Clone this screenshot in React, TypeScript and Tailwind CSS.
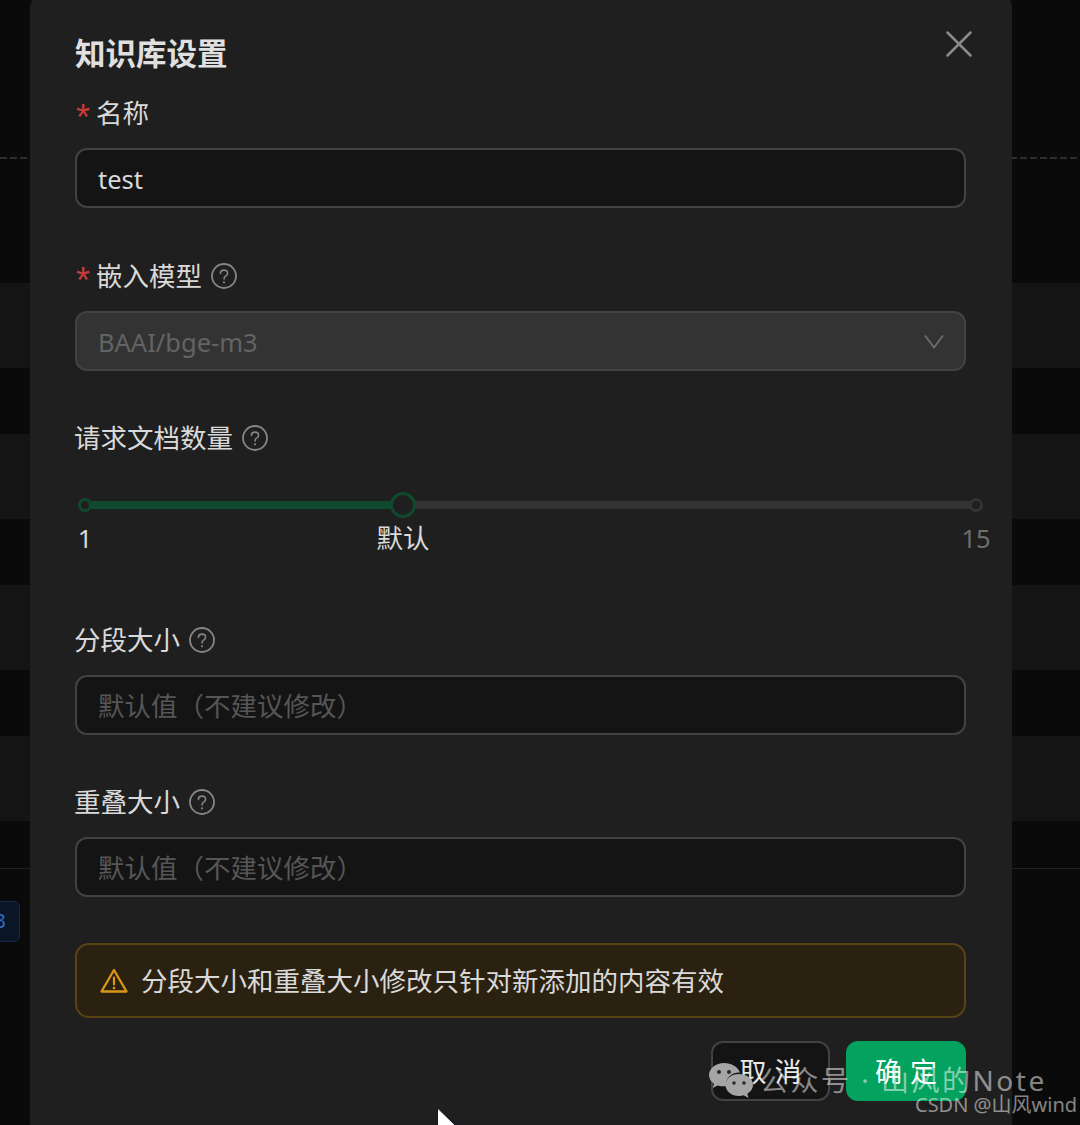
import React from "react";
import { X } from "lucide-react";

const FONT = "font-['Noto_Sans','Noto_Sans_CJK_SC',sans-serif]";

const HelpIcon = () => (
  <svg width="26" height="26" viewBox="0 0 26 26" fill="none" className="shrink-0">
    <circle cx="13" cy="13" r="12" stroke="#858585" strokeWidth="1.8" />
    <path
      d="M9.4 10.4c0-2 1.6-3.3 3.6-3.3s3.6 1.3 3.6 3.1c0 1.500-.9 2.200-2 2.900-1 .6-1.500 1.200-1.500 2.400v.4"
      stroke="#858585"
      strokeWidth="1.6"
      strokeLinecap="round"
    />
    <circle cx="13" cy="19.300" r="1.100" fill="#858585" />
  </svg>
);

const Label = ({ text, required, help }: { text: string; required?: boolean; help?: boolean }) => (
  <div className="flex items-center h-[36px] text-[26.500px] text-[#d9d9d9] leading-[36px]">
    {required && (
      <span className="text-[#c93c3c] w-[20px] text-[36px] leading-[36px] font-['Liberation_Sans',sans-serif] pt-[9px] ml-[1px]">
        *
      </span>
    )}
    <span className={required ? "" : "ml-[-1px]"}>{text}</span>
    {help && (
      <span className="ml-[9px] flex">
        <HelpIcon />
      </span>
    )}
  </div>
);

const TextBox = ({ value, placeholder }: { value?: string; placeholder?: string }) => (
  <div className="h-[60px] mt-[17px] rounded-[12px] border-2 border-[#424242] bg-[#141414] px-[21px] pt-[3px] flex items-center">
    {value ? (
      <span className="text-[25.500px] text-[#d9d9d9]">{value}</span>
    ) : (
      <span className="text-[26.500px] text-[#565656]">{placeholder}</span>
    )}
  </div>
);

const Slider = () => (
  <div className="relative ml-[10px] w-[891px] h-[8px] mt-[45px] rounded-full bg-[#333333]">
    <div className="h-full w-[318px] rounded-full bg-[#0f4a2e]" />
    <div className="absolute left-[-7px] top-[-3px] w-[14px] h-[14px] rounded-full border-[3px] border-[#0f4a2e] bg-[#1f1f1f]" />
    <div className="absolute left-[305px] top-[-9px] w-[26px] h-[26px] rounded-full border-[3px] border-[#0f4a2e] bg-[#1f1f1f]" />
    <div className="absolute right-[-7px] top-[-3px] w-[14px] h-[14px] rounded-full border-[3px] border-[#333333] bg-[#1f1f1f]" />
    <span className="absolute left-0 top-[19px] -translate-x-1/2 text-[25.500px] leading-[36px] text-[#d9d9d9]">1</span>
    <span className="absolute left-[318px] top-[19px] -translate-x-1/2 text-[26.500px] leading-[36px] whitespace-nowrap text-[#d9d9d9]">默认</span>
    <span className="absolute left-full top-[19px] -translate-x-1/2 text-[25.500px] leading-[36px] text-[#6e6e6e]">15</span>
  </div>
);

const WeChatMark = () => (
  <svg width="44" height="36" viewBox="0 0 44 36" className="shrink-0">
    <path d="M15 1C7 1 0 6.500 0 13c0 3.600 2 6.600 5 8.800L3.700 26l5-2.600c2 .6 4 .9 6.300.9 1 0 1.500-.1 2-.2C16 16 23 10 31 10.500 29 5 22.500 1 15 1z" fill="#a5a5a5" />
    <circle cx="10" cy="10" r="2" fill="#2a2a2a" />
    <circle cx="20" cy="10" r="2" fill="#2a2a2a" />
    <path d="M30 12c-7.500 0-13.500 4.800-13.500 11S22.500 34 30 34c1.700 0 3.300-.3 4.700-.7L39.500 36l-1.200-4.200C41.700 29.800 44 26.600 44 23c0-6.200-6.500-11-14-11z" fill="#a5a5a5" />
    <circle cx="25" cy="21" r="1.800" fill="#2a2a2a" />
    <circle cx="35" cy="21" r="1.800" fill="#2a2a2a" />
  </svg>
);

export default function App() {
  return (
    <div className={`relative w-[1080px] h-[1125px] overflow-hidden bg-[#0a0a0a] ${FONT}`}>
      {/* table behind the dialog */}
      <div className="flex flex-col">
        <div className="h-[157px]" />
        <div className="h-[2px] bg-[repeating-linear-gradient(90deg,#2e2e2e_0_7px,transparent_7px_10px)]" />
        <div className="h-[124px]" />
        <div className="h-[85px] bg-[#141414]" />
        <div className="h-[66px]" />
        <div className="h-[85px] bg-[#141414]" />
        <div className="h-[66px]" />
        <div className="h-[85px] bg-[#141414]" />
        <div className="h-[66px]" />
        <div className="h-[85px] bg-[#141414]" />
        <div className="h-[48px] border-b border-[#222222]" />
      </div>
      <div className="absolute left-[-14px] top-[901px] w-[34px] h-[41px] rounded-[6px] border border-[#12294a] bg-[#0a1525] text-[#2d6fc4] text-[20px] leading-[38px] text-right pr-[13px]">
        3
      </div>

      {/* dialog */}
      <div className="absolute left-[30px] top-[-5px] w-[982px] h-[1140px] rounded-[12px] bg-[#1f1f1f] pl-[45px] pr-[46px] pt-[38px]">
        <div className="absolute right-[30px] top-[26px] text-[#8a8a8a]">
          <X size={46} strokeWidth={1.300} />
        </div>
        <div className="text-[30.500px] leading-[40px] font-bold text-[#e0e0e0]">知识库设置</div>

        <div className="mt-[22px]">
          <Label text="名称" required />
          <TextBox value="test" />
        </div>

        <div className="mt-[50px]">
          <Label text="嵌入模型" required help />
          <div className="h-[60px] mt-[17px] rounded-[12px] border-2 border-[#424242] bg-[#333333] pl-[21px] pr-[20px] pt-[3px] flex items-center justify-between text-[25.500px] text-[#636363]">
            <span>BAAI/bge-m3</span>
            <svg width="20" height="15" viewBox="0 0 20 15" fill="none" className="mb-[3px]">
              <path d="M1 1.500 L10 13.500 L19 1.500" stroke="#6e6e6e" strokeWidth="1.800" />
            </svg>
          </div>
        </div>

        <div className="mt-[49px]">
          <Label text="请求文档数量" help />
          <Slider />
        </div>

        <div className="mt-[113px]">
          <Label text="分段大小" help />
          <TextBox placeholder="默认值（不建议修改）" />
        </div>

        <div className="mt-[49px]">
          <Label text="重叠大小" help />
          <TextBox placeholder="默认值（不建议修改）" />
        </div>

        <div className="mt-[46px] h-[75px] rounded-[14px] border-2 border-[#594214] bg-[#2b2111] pl-[23px] pt-[2px] flex items-center gap-[13px] text-[26.500px] text-[#d9d9d9]">
          <svg width="28" height="25" viewBox="0 0 28 25" fill="none" className="shrink-0 mb-[3px]">
            <path d="M14 2 L26.500 23.500 H1.500 Z" stroke="#d89614" strokeWidth="2.300" strokeLinejoin="round" />
            <path d="M14 9.500v7" stroke="#d89614" strokeWidth="2.200" strokeLinecap="round" />
            <circle cx="14" cy="20" r="1.300" fill="#d89614" />
          </svg>
          <span>分段大小和重叠大小修改只针对新添加的内容有效</span>
        </div>

        <div className="mt-[23px] flex justify-end gap-[16px]">
          <div className="w-[119px] h-[60px] rounded-[12px] border-2 border-[#424242] bg-[#141414] pl-[8px] pt-[3px] flex items-center justify-center text-[#e8e8e8] text-[27px] tracking-[8px]">
            取消
          </div>
          <div className="w-[120px] h-[60px] rounded-[12px] bg-[#03a25f] pl-[8px] pt-[3px] flex items-center justify-center text-white text-[27px] tracking-[8px]">
            确定
          </div>
        </div>
      </div>

      {/* mouse cursor */}
      <svg className="absolute left-[436px] top-[1107px]" width="22" height="20" viewBox="0 0 22 20">
        <path d="M1.500 1 L19 18 V20 H1.500 Z" fill="#ffffff" stroke="#14142a" strokeWidth="1" />
      </svg>

      {/* watermarks */}
      <div className="absolute left-[709px] top-[1062px] flex items-center gap-[7px] text-[28px] leading-[36px] tracking-[2.500px] text-[#ffffff80] whitespace-nowrap">
        <WeChatMark />
        <span>公众号 · 山风的Note</span>
      </div>
      <div className="absolute left-[915px] top-[1091px] text-[20px] leading-[28px] text-[#ffffff80] whitespace-nowrap">
        CSDN @山风wind
      </div>
    </div>
  );
}
